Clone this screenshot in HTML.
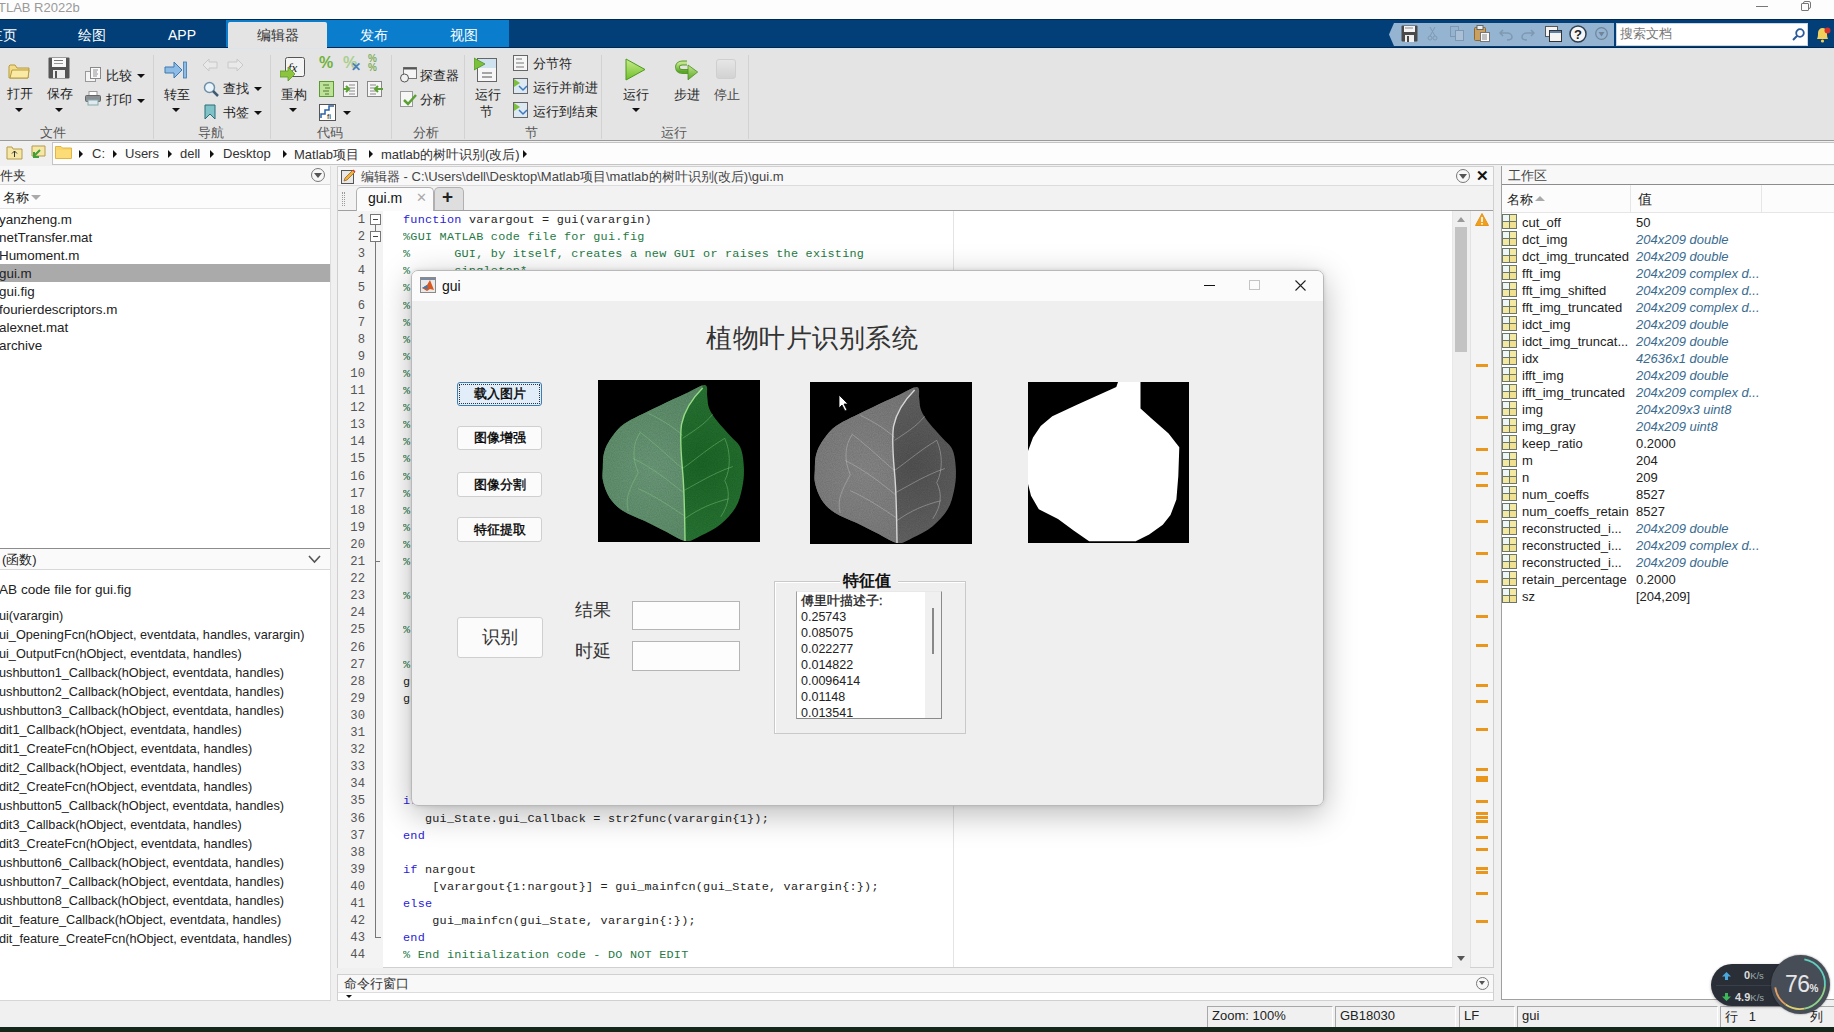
<!DOCTYPE html>
<html><head><meta charset="utf-8">
<style>
*{box-sizing:border-box}
html,body{margin:0;padding:0;width:1834px;height:1032px;overflow:hidden;background:#f0f0f0;font-family:"Liberation Sans",sans-serif;font-size:13px;color:#222}
.a{position:absolute}
.mono{font-family:"Liberation Mono",monospace}
#title{left:0;top:0;width:1834px;height:19px;background:#fdfdfd}
#tabbar{left:0;top:19px;width:1834px;height:29px;background:#023f79;border-top:1px solid #01294f;border-bottom:1px solid #01294f}
.tab{position:absolute;top:0;height:29px;line-height:30px;color:#fff;font-size:14px;text-align:center}
#ribbon{left:0;top:48px;width:1834px;height:93px;background:#e4e4e4;border-top:1px solid #dce3ea;border-bottom:1px solid #9a9a9a}
.sep{position:absolute;top:6px;width:1px;height:84px;background:#d2d2d2}
.glab{position:absolute;top:75px;font-size:13px;color:#555;text-align:center}
.rl{position:absolute;font-size:13px;color:#222;white-space:nowrap}
#addr{left:0;top:141px;width:1834px;height:25px;background:#f0f0f0}
.panel{position:absolute;background:#fff}
.phdr{position:absolute;left:0;top:0;right:0;height:19px;background:#f7f7f7;border-bottom:1px solid #d9d9d9;font-size:13px;color:#333;line-height:18px}
</style></head><body>

<!-- title bar -->
<div id="title" class="a">
  <div class="a" style="left:-2px;top:0;font-size:13px;color:#9a9a9a;line-height:15px">TLAB R2022b</div>
  <div class="a" style="left:1756px;top:6px;width:12px;height:1px;background:#777"></div>
  <div class="a" style="left:1803px;top:1px;width:8px;height:8px;border:1px solid #777;border-radius:2px"></div><div class="a" style="left:1801px;top:3px;width:8px;height:8px;border:1px solid #777;border-radius:1px;background:#fdfdfd"></div>
</div>

<!-- tab bar -->
<div id="tabbar" class="a">
  <div class="a" style="left:226px;top:0;width:283px;height:27px;background:#0a7dcc"></div>
  <div class="a" style="left:228px;top:2px;width:99px;height:27px;background:#e4e4e4;border-radius:2px 2px 0 0"></div>
  <svg class="a" style="left:1389px;top:3px" width="225" height="23" viewBox="0 0 225 23"><path d="M5 0 L225 0 L225 23 L5 23 L0 11.5 Z" fill="#94b4d2"/></svg>
  <svg class="a" style="left:1401px;top:5px" width="17" height="17" viewBox="0 0 17 17"><rect x="0.5" y="0.5" width="16" height="16" rx="1" fill="#4a4a4a"/><rect x="3" y="1" width="11" height="6" fill="#f4f4f4"/><rect x="4" y="2.5" width="8" height="1" fill="#888"/><rect x="4" y="10" width="9" height="7" fill="#f0f0f0"/><rect x="6" y="11" width="2" height="6" fill="#4a4a4a"/></svg>
  <svg class="a" style="left:1427px;top:6px" width="11" height="15" viewBox="0 0 11 15"><path d="M3 10 L8 1 M8 10 L3 1" stroke="#7f98b0" stroke-width="1"/><circle cx="3" cy="12" r="2" fill="none" stroke="#7f98b0"/><circle cx="8" cy="12" r="2" fill="none" stroke="#7f98b0"/></svg>
  <svg class="a" style="left:1450px;top:6px" width="15" height="15" viewBox="0 0 15 15"><rect x="0.5" y="0.5" width="8" height="10" fill="none" stroke="#7f98b0"/><rect x="5.5" y="4.5" width="8" height="10" fill="#a9c0d6" stroke="#7f98b0"/></svg>
  <svg class="a" style="left:1474px;top:5px" width="16" height="17" viewBox="0 0 16 17"><rect x="0.5" y="2.5" width="11" height="13" rx="1" fill="#c9a060" stroke="#8a6a30"/><rect x="3" y="0.5" width="6" height="4" fill="#eee" stroke="#666"/><rect x="6.5" y="7.5" width="9" height="9" fill="#fafafa" stroke="#777"/><path d="M8 10h5M8 12h5M8 14h5" stroke="#888"/></svg>
  <svg class="a" style="left:1499px;top:7px" width="14" height="14" viewBox="0 0 14 14"><path d="M4 3 L1 6 L4 9 M1 6 L8 6 C11 6 13 8 13 10 C13 12 11 13 8 13" fill="none" stroke="#7f98b0" stroke-width="1.5"/></svg>
  <svg class="a" style="left:1521px;top:7px" width="14" height="14" viewBox="0 0 14 14"><path d="M10 3 L13 6 L10 9 M13 6 L6 6 C3 6 1 8 1 10 C1 12 3 13 6 13" fill="none" stroke="#7f98b0" stroke-width="1.5"/></svg>
  <svg class="a" style="left:1545px;top:6px" width="17" height="16" viewBox="0 0 17 16"><rect x="0.5" y="0.5" width="12" height="10" fill="#f4f4f4" stroke="#555"/><rect x="4.5" y="4.5" width="12" height="11" fill="#f4f4f4" stroke="#333"/><rect x="5" y="5" width="11" height="2" fill="#5a7fa8"/></svg>
  <svg class="a" style="left:1569px;top:5px" width="18" height="18" viewBox="0 0 18 18"><circle cx="9" cy="9" r="8" fill="#f6f6f6" stroke="#2d3f52" stroke-width="1.5"/><text x="5" y="14" font-size="13" font-weight="bold" font-family="Liberation Sans" fill="#222">?</text></svg>
  <svg class="a" style="left:1595px;top:7px" width="13" height="13" viewBox="0 0 13 13"><circle cx="6.5" cy="6.5" r="5.8" fill="none" stroke="#6f8499" stroke-width="1.2"/><path d="M3.5 5 L9.5 5 L6.5 9.5 Z" fill="#6f8499"/></svg>
  <div class="a" style="left:1616px;top:3px;width:192px;height:23px;background:#fff;border:1px solid #c9d6e3"></div>
  <div class="a" style="left:1620px;top:6px;font-size:12.5px;color:#777;line-height:16px">搜索文档</div>
  <svg class="a" style="left:1792px;top:8px" width="13" height="13" viewBox="0 0 13 13"><circle cx="8" cy="5" r="3.8" fill="none" stroke="#2a5a9a" stroke-width="1.8"/><path d="M5.2 7.8 L1 12" stroke="#2a5a9a" stroke-width="2"/></svg>
  <svg class="a" style="left:1814px;top:6px" width="18" height="18" viewBox="0 0 18 18"><path d="M3 13 C4 11 4 9 4 7 C4 4 6 2 8.5 2 C11 2 13 4 13 7 C13 9 13 11 14 13 Z" fill="#f2cf5b"/><circle cx="8.5" cy="15" r="1.6" fill="#f2cf5b"/><circle cx="13.5" cy="4.5" r="3" fill="#d9302a"/></svg>
  <div class="tab" style="left:-19px;width:44px">主页</div>
  <div class="tab" style="left:70px;width:44px">绘图</div>
  <div class="tab" style="left:160px;width:44px">APP</div>
  <div class="tab" style="left:228px;width:99px;color:#333">编辑器</div>
  <div class="tab" style="left:350px;width:48px">发布</div>
  <div class="tab" style="left:440px;width:48px">视图</div>
</div>

<!-- ribbon -->
<div id="ribbon" class="a">
  <div class="sep" style="left:153px"></div>
  <div class="sep" style="left:270px"></div>
  <div class="sep" style="left:391px"></div>
  <div class="sep" style="left:464px"></div>
  <div class="sep" style="left:601px"></div>
  <div class="sep" style="left:748px"></div>
  <div class="glab" style="left:38px;width:30px">文件</div>
  <div class="glab" style="left:196px;width:30px">导航</div>
  <div class="glab" style="left:315px;width:30px">代码</div>
  <div class="glab" style="left:411px;width:30px">分析</div>
  <div class="glab" style="left:524px;width:15px">节</div>
  <div class="glab" style="left:659px;width:30px">运行</div>
  <!-- 文件 -->
  <svg class="a" style="left:8px;top:14px" width="22" height="17" viewBox="0 0 22 17"><path d="M1 3 L1 15 L20 15 L21 5 L9 5 L7 2 L2 2 Z" fill="#f3dd8a" stroke="#b89a3a"/><path d="M2 15 L4 7 L21 7 L20 15 Z" fill="#f9eaa6" stroke="#b89a3a"/></svg>
  <div class="rl" style="left:7px;top:36px">打开</div>
  <div class="a" style="left:15px;top:59px;width:0;height:0;border-left:4px solid transparent;border-right:4px solid transparent;border-top:4px solid #111"></div>
  <svg class="a" style="left:48px;top:8px" width="22" height="22" viewBox="0 0 22 22"><rect x="0.5" y="0.5" width="21" height="21" rx="1" fill="#555"/><rect x="4" y="1" width="14" height="9" fill="#fafafa"/><rect x="6" y="3" width="9" height="1" fill="#777"/><rect x="6" y="6" width="9" height="1" fill="#999"/><rect x="5" y="13" width="12" height="8" fill="#eee"/><rect x="7" y="14" width="2" height="7" fill="#555"/></svg>
  <div class="rl" style="left:47px;top:36px">保存</div>
  <div class="a" style="left:55px;top:59px;width:0;height:0;border-left:4px solid transparent;border-right:4px solid transparent;border-top:4px solid #111"></div>
  <svg class="a" style="left:85px;top:18px" width="16" height="15" viewBox="0 0 16 15"><rect x="0.5" y="4.5" width="10" height="10" fill="#f4f4f4" stroke="#999"/><rect x="5.5" y="0.5" width="10" height="11" fill="#fafafa" stroke="#888"/><path d="M8 3h5M8 5h4M8 7h5M8 9h4" stroke="#777" stroke-width="0.8"/></svg>
  <div class="rl" style="left:106px;top:18px">比较</div>
  <div class="a" style="left:137px;top:25px;width:0;height:0;border-left:4px solid transparent;border-right:4px solid transparent;border-top:4px solid #111"></div>
  <svg class="a" style="left:85px;top:42px" width="16" height="15" viewBox="0 0 16 15"><rect x="4" y="0.5" width="8" height="5" fill="#fff" stroke="#999"/><rect x="0.5" y="4.5" width="15" height="6" rx="1" fill="#8a8f94" stroke="#666"/><rect x="3" y="9" width="10" height="5" fill="#dfe9ef" stroke="#8aa"/></svg>
  <div class="rl" style="left:106px;top:42px">打印</div>
  <div class="a" style="left:137px;top:50px;width:0;height:0;border-left:4px solid transparent;border-right:4px solid transparent;border-top:4px solid #111"></div>
  <!-- 导航 -->
  <svg class="a" style="left:164px;top:12px" width="24" height="18" viewBox="0 0 24 18"><path d="M1 6 L10 6 L10 1 L18 9 L10 17 L10 12 L1 12 Z" fill="#8dbde6" stroke="#3f79ad"/><rect x="19.5" y="1" width="3" height="16" fill="#8dbde6" stroke="#3f79ad" stroke-width="0.8"/></svg>
  <div class="rl" style="left:164px;top:37px">转至</div>
  <div class="a" style="left:172px;top:59px;width:0;height:0;border-left:4px solid transparent;border-right:4px solid transparent;border-top:4px solid #111"></div>
  <svg class="a" style="left:202px;top:9px" width="42" height="14" viewBox="0 0 42 14"><path d="M1 7 L7 1 L7 4 L15 4 L15 10 L7 10 L7 13 Z" fill="#e9e9e9" stroke="#c8c8c8"/><path d="M41 7 L35 1 L35 4 L26 4 L26 10 L35 10 L35 13 Z" fill="#e9e9e9" stroke="#c8c8c8"/></svg>
  <svg class="a" style="left:203px;top:32px" width="16" height="16" viewBox="0 0 16 16"><circle cx="6.5" cy="6.5" r="5" fill="#eaf4fb" stroke="#6f8fa8" stroke-width="1.5"/><path d="M10 10 L15 15" stroke="#3d5a75" stroke-width="2.5"/></svg>
  <div class="rl" style="left:223px;top:31px">查找</div>
  <div class="a" style="left:254px;top:38px;width:0;height:0;border-left:4px solid transparent;border-right:4px solid transparent;border-top:4px solid #111"></div>
  <svg class="a" style="left:204px;top:55px" width="12" height="16" viewBox="0 0 12 16"><path d="M1 1 L11 1 L11 15 L6 10 L1 15 Z" fill="#7fc3c9" stroke="#2a6d76"/></svg>
  <div class="rl" style="left:223px;top:55px">书签</div>
  <div class="a" style="left:254px;top:62px;width:0;height:0;border-left:4px solid transparent;border-right:4px solid transparent;border-top:4px solid #111"></div>
  <!-- 代码 -->
  <svg class="a" style="left:280px;top:8px" width="26" height="25" viewBox="0 0 26 25"><rect x="5.5" y="0.5" width="19" height="19" rx="2" fill="#f4f4f4" stroke="#555"/><text x="8" y="15" font-family="Liberation Serif" font-style="italic" font-size="13" fill="#222">fx</text><path d="M0 14 L8 14 L8 10 L15 17 L8 24 L8 20 L0 20 Z" fill="#8cc43e" stroke="#5d9a23" stroke-width="0.8"/></svg>
  <div class="rl" style="left:281px;top:37px">重构</div>
  <div class="a" style="left:289px;top:59px;width:0;height:0;border-left:4px solid transparent;border-right:4px solid transparent;border-top:4px solid #111"></div>
  <div class="a" style="left:319px;top:6px;font-size:16px;font-weight:bold;color:#6fb238;line-height:16px">%</div>
  <div class="a" style="left:343px;top:6px;font-size:16px;font-weight:bold;color:#a9cf8e;line-height:16px">%</div>
  <div class="a" style="left:351px;top:12px;font-size:12px;font-weight:bold;color:#4b7fb6;line-height:12px">✕</div>
  <div class="a" style="left:368px;top:5px;font-size:10px;font-weight:bold;color:#7fae5e;line-height:9px">%<br>%</div>
  <svg class="a" style="left:319px;top:32px" width="70" height="17" viewBox="0 0 70 17"><rect x="0.5" y="0.5" width="14" height="15" fill="#bfe29a" stroke="#5a9a2f"/><path d="M4 4h6M6 7h5M4 10h6M6 13h4" stroke="#4a7a2a"/><rect x="24.5" y="0.5" width="14" height="15" fill="#f6f6f6" stroke="#888"/><path d="M30 4h6M30 7h6M30 10h6M30 13h6" stroke="#888"/><path d="M24 8 L30 8 M27 5 L30 8 L27 11" stroke="#5aa032" stroke-width="2" fill="none"/><rect x="48.5" y="0.5" width="14" height="15" fill="#f6f6f6" stroke="#888"/><path d="M51 4h6M51 7h6M51 10h6M51 13h6" stroke="#888"/><path d="M64 8 L56 8 M59 5 L56 8 L59 11" stroke="#5aa032" stroke-width="2" fill="none"/></svg>
  <svg class="a" style="left:319px;top:55px" width="17" height="17" viewBox="0 0 17 17"><rect x="0.5" y="0.5" width="16" height="16" fill="#fff" stroke="#555"/><path d="M2 14 L2 10 L6 10 L6 6 L10 6 L10 2 L15 2" stroke="#2b63a6" stroke-width="1.5" fill="none"/><text x="8" y="15" font-size="8" font-family="Liberation Sans" fill="#222">fi</text></svg>
  <div class="a" style="left:343px;top:62px;width:0;height:0;border-left:4px solid transparent;border-right:4px solid transparent;border-top:4px solid #111"></div>
  <!-- 分析 -->
  <svg class="a" style="left:400px;top:18px" width="17" height="16" viewBox="0 0 17 16"><rect x="3.5" y="0.5" width="13" height="11" fill="#f4f4f4" stroke="#777"/><rect x="3.5" y="0.5" width="13" height="2" fill="#555"/><circle cx="4.5" cy="11" r="4" fill="#f0f0f0" stroke="#555"/></svg>
  <div class="rl" style="left:420px;top:18px">探查器</div>
  <svg class="a" style="left:400px;top:42px" width="17" height="16" viewBox="0 0 17 16"><rect x="0.5" y="0.5" width="12" height="15" fill="#f6f6f6" stroke="#999"/><path d="M4 9 L8 13 L16 4" stroke="#5aa032" stroke-width="2.5" fill="none"/></svg>
  <div class="rl" style="left:420px;top:42px">分析</div>
  <!-- 节 -->
  <svg class="a" style="left:474px;top:8px" width="24" height="26" viewBox="0 0 24 26"><rect x="3.5" y="1.5" width="19" height="23" fill="#f6f6f6" stroke="#666"/><rect x="4" y="2" width="18" height="9" fill="#cfe2f0"/><path d="M8 16h10M8 20h10" stroke="#555"/><path d="M0 1 L11 7 L0 13 Z" fill="#7cc13c" stroke="#4d8f24" stroke-width="0.8"/></svg>
  <div class="rl" style="left:475px;top:37px">运行</div>
  <div class="rl" style="left:480px;top:54px">节</div>
  <svg class="a" style="left:513px;top:6px" width="15" height="16" viewBox="0 0 15 16"><rect x="0.5" y="0.5" width="14" height="15" fill="#f6f6f6" stroke="#666"/><path d="M3 4h6M3 8h8M3 12h8" stroke="#777"/></svg>
  <div class="rl" style="left:533px;top:6px">分节符</div>
  <svg class="a" style="left:513px;top:29px" width="15" height="40" viewBox="0 0 15 40"><rect x="0.5" y="0.5" width="14" height="15" fill="#dde9f2" stroke="#666"/><path d="M1 1 L7 5 L1 9 Z" fill="#7cc13c"/><path d="M6 8 L10 12 L14 8" stroke="#3b7ac0" stroke-width="1.5" fill="none"/><rect x="0.5" y="24.5" width="14" height="15" fill="#dde9f2" stroke="#666"/><path d="M1 25 L7 29 L1 33 Z" fill="#7cc13c"/><path d="M6 32 L10 36 L14 32" stroke="#3b7ac0" stroke-width="1.5" fill="none"/></svg>
  <div class="rl" style="left:533px;top:30px">运行并前进</div>
  <div class="rl" style="left:533px;top:54px">运行到结束</div>
  <!-- 运行 -->
  <svg class="a" style="left:625px;top:9px" width="22" height="23" viewBox="0 0 22 23"><defs><linearGradient id="gp" x1="0" y1="0" x2="0" y2="1"><stop offset="0" stop-color="#c9ec8c"/><stop offset="1" stop-color="#6fbf2a"/></linearGradient></defs><path d="M1 1 L20 11.5 L1 22 Z" fill="url(#gp)" stroke="#4c9a1c"/></svg>
  <div class="rl" style="left:623px;top:37px">运行</div>
  <div class="a" style="left:632px;top:59px;width:0;height:0;border-left:4px solid transparent;border-right:4px solid transparent;border-top:4px solid #111"></div>
  <svg class="a" style="left:673px;top:9px" width="26" height="24" viewBox="0 0 26 24"><defs><linearGradient id="gst" x1="0" y1="0" x2="0" y2="1"><stop offset="0" stop-color="#c2e68a"/><stop offset="1" stop-color="#5aa82a"/></linearGradient></defs><path d="M14 5 L9.5 5 C6 5 4.5 7 4.5 9.2 C4.5 11.5 6 13.5 9.5 13.5 L16 13.5" fill="none" stroke="#5a9a2a" stroke-width="4.8"/><path d="M14 5 L9.5 5 C6 5 4.5 7 4.5 9.2 C4.5 11.5 6 13.5 9.5 13.5 L16 13.5" fill="none" stroke="url(#gst)" stroke-width="3"/><path d="M15 7 L24.7 14 L15 21.8 Z" fill="url(#gst)" stroke="#4d8f22" stroke-width="0.8" stroke-linejoin="round"/></svg>
  <div class="rl" style="left:674px;top:37px">步进</div>
  <div class="a" style="left:716px;top:10px;width:20px;height:20px;border-radius:3px;background:linear-gradient(#e6e6e6,#d2d2d2);border:1px solid #cfcfcf"></div>
  <div class="rl" style="left:714px;top:37px;color:#444">停止</div>
</div>

<!-- address bar -->
<div id="addr" class="a">
  <svg class="a" style="left:6px;top:4px" width="17" height="15" viewBox="0 0 17 15"><path d="M1 2 L6 2 L7 4 L16 4 L16 14 L1 14 Z" fill="#f6e7a6" stroke="#b59b4c"/><path d="M8.5 12 L8.5 6 M6 8.5 L8.5 6 L11 8.5" stroke="#333" fill="none"/></svg>
  <svg class="a" style="left:29px;top:4px" width="17" height="15" viewBox="0 0 17 15"><path d="M3 1 L16 1 L16 11 L3 11 Z" fill="#f6e7a6" stroke="#b59b4c"/><path d="M11 5 L5 11 M5 7 L5 12 L10 12" stroke="#3fa03a" stroke-width="2" fill="none"/></svg>
  <div class="a" style="left:52px;top:1px;width:1782px;height:23px;background:#fdfdfd;border:1px solid #c4c4c4;border-right:none"></div>
  <svg class="a" style="left:55px;top:4px" width="17" height="14" viewBox="0 0 17 14"><path d="M0.5 1.5 L6 1.5 L7.5 3 L16.5 3 L16.5 13.5 L0.5 13.5 Z" fill="#f7d56a" stroke="#e2b443"/><rect x="1" y="5" width="15" height="8" fill="#fbdc77"/></svg>
<div class="a" style="left:79px;top:9px;width:0;height:0;border-top:4px solid transparent;border-bottom:4px solid transparent;border-left:4px solid #111"></div>
  <div class="rl" style="left:92px;top:5px;color:#333">C:</div><div class="a" style="left:113px;top:9px;width:0;height:0;border-top:4px solid transparent;border-bottom:4px solid transparent;border-left:4px solid #111"></div>
  <div class="rl" style="left:125px;top:5px;color:#333">Users</div><div class="a" style="left:168px;top:9px;width:0;height:0;border-top:4px solid transparent;border-bottom:4px solid transparent;border-left:4px solid #111"></div>
  <div class="rl" style="left:180px;top:5px;color:#333">dell</div><div class="a" style="left:210px;top:9px;width:0;height:0;border-top:4px solid transparent;border-bottom:4px solid transparent;border-left:4px solid #111"></div>
  <div class="rl" style="left:223px;top:5px;color:#333">Desktop</div><div class="a" style="left:283px;top:9px;width:0;height:0;border-top:4px solid transparent;border-bottom:4px solid transparent;border-left:4px solid #111"></div>
  <div class="rl" style="left:294px;top:5px;color:#333">Matlab项目</div><div class="a" style="left:369px;top:9px;width:0;height:0;border-top:4px solid transparent;border-bottom:4px solid transparent;border-left:4px solid #111"></div>
  <div class="rl" style="left:381px;top:5px;color:#333">matlab的树叶识别(改后)</div><div class="a" style="left:523px;top:9px;width:0;height:0;border-top:4px solid transparent;border-bottom:4px solid transparent;border-left:4px solid #111"></div>
</div>
<!-- left panel -->
<div class="panel" style="left:0;top:166px;width:331px;height:835px;border-right:1px solid #dedede;border-bottom:1px solid #d6d6d6">
  <div class="phdr" style="padding-left:0">
    <span class="a" style="left:-13px;top:1px">文件夹</span>
    <div class="a" style="left:311px;top:2px;width:14px;height:14px;border:1px solid #777;border-radius:50%"></div>
    <div class="a" style="left:314px;top:7px;width:0;height:0;border-left:4px solid transparent;border-right:4px solid transparent;border-top:5px solid #555"></div>
  </div>
  <div class="a" style="left:0;top:19px;width:330px;height:24px;background:#fcfcfc;border-bottom:1px solid #e3e3e3">
    <span class="a" style="left:3px;top:4px;color:#222">名称</span>
    <div class="a" style="left:31px;top:10px;width:0;height:0;border-left:5px solid transparent;border-right:5px solid transparent;border-top:5px solid #aaa"></div>
  </div>
  <div class="a" style="left:-1px;top:45px;line-height:18px;white-space:nowrap;font-size:13.4px">yanzheng.m</div>
  <div class="a" style="left:-1px;top:63px;line-height:18px;white-space:nowrap;font-size:13.4px">netTransfer.mat</div>
  <div class="a" style="left:-1px;top:81px;line-height:18px;white-space:nowrap;font-size:13.4px">Humoment.m</div>
  <div class="a" style="left:0;top:98px;width:330px;height:18px;background:#aaaaaa"></div>
  <div class="a" style="left:-1px;top:99px;line-height:18px;white-space:nowrap;font-size:13.4px">gui.m</div>
  <div class="a" style="left:-1px;top:117px;line-height:18px;white-space:nowrap;font-size:13.4px">gui.fig</div>
  <div class="a" style="left:-1px;top:135px;line-height:18px;white-space:nowrap;font-size:13.4px">fourierdescriptors.m</div>
  <div class="a" style="left:-1px;top:153px;line-height:18px;white-space:nowrap;font-size:13.4px">alexnet.mat</div>
  <div class="a" style="left:-1px;top:171px;line-height:18px;white-space:nowrap;font-size:13.4px">archive</div>
  <div class="a" style="left:0;top:382px;width:330px;height:22px;background:#fafafa;border-top:1px solid #8c8c8c;border-bottom:1px solid #d8d8d8">
    <span class="a" style="left:2px;top:2px">(函数)</span>
    <svg class="a" style="left:308px;top:6px" width="13" height="9" viewBox="0 0 13 9"><path d="M1 1 L6.5 7 L12 1" stroke="#555" stroke-width="1.6" fill="none"/></svg>
  </div>
  <div class="a" style="left:-1px;top:415px;line-height:18px;white-space:nowrap;font-size:13.6px">AB code file for gui.fig</div>
  <div class="a" style="left:-1px;top:441px;line-height:18px;white-space:nowrap;font-size:12.7px">ui(varargin)</div>
  <div class="a" style="left:-1px;top:460px;line-height:18px;white-space:nowrap;font-size:12.7px">ui_OpeningFcn(hObject, eventdata, handles, varargin)</div>
  <div class="a" style="left:-1px;top:479px;line-height:18px;white-space:nowrap;font-size:12.7px">ui_OutputFcn(hObject, eventdata, handles)</div>
  <div class="a" style="left:-1px;top:498px;line-height:18px;white-space:nowrap;font-size:12.7px">ushbutton1_Callback(hObject, eventdata, handles)</div>
  <div class="a" style="left:-1px;top:517px;line-height:18px;white-space:nowrap;font-size:12.7px">ushbutton2_Callback(hObject, eventdata, handles)</div>
  <div class="a" style="left:-1px;top:536px;line-height:18px;white-space:nowrap;font-size:12.7px">ushbutton3_Callback(hObject, eventdata, handles)</div>
  <div class="a" style="left:-1px;top:555px;line-height:18px;white-space:nowrap;font-size:12.7px">dit1_Callback(hObject, eventdata, handles)</div>
  <div class="a" style="left:-1px;top:574px;line-height:18px;white-space:nowrap;font-size:12.7px">dit1_CreateFcn(hObject, eventdata, handles)</div>
  <div class="a" style="left:-1px;top:593px;line-height:18px;white-space:nowrap;font-size:12.7px">dit2_Callback(hObject, eventdata, handles)</div>
  <div class="a" style="left:-1px;top:612px;line-height:18px;white-space:nowrap;font-size:12.7px">dit2_CreateFcn(hObject, eventdata, handles)</div>
  <div class="a" style="left:-1px;top:631px;line-height:18px;white-space:nowrap;font-size:12.7px">ushbutton5_Callback(hObject, eventdata, handles)</div>
  <div class="a" style="left:-1px;top:650px;line-height:18px;white-space:nowrap;font-size:12.7px">dit3_Callback(hObject, eventdata, handles)</div>
  <div class="a" style="left:-1px;top:669px;line-height:18px;white-space:nowrap;font-size:12.7px">dit3_CreateFcn(hObject, eventdata, handles)</div>
  <div class="a" style="left:-1px;top:688px;line-height:18px;white-space:nowrap;font-size:12.7px">ushbutton6_Callback(hObject, eventdata, handles)</div>
  <div class="a" style="left:-1px;top:707px;line-height:18px;white-space:nowrap;font-size:12.7px">ushbutton7_Callback(hObject, eventdata, handles)</div>
  <div class="a" style="left:-1px;top:726px;line-height:18px;white-space:nowrap;font-size:12.7px">ushbutton8_Callback(hObject, eventdata, handles)</div>
  <div class="a" style="left:-1px;top:745px;line-height:18px;white-space:nowrap;font-size:12.7px">dit_feature_Callback(hObject, eventdata, handles)</div>
  <div class="a" style="left:-1px;top:764px;line-height:18px;white-space:nowrap;font-size:12.7px">dit_feature_CreateFcn(hObject, eventdata, handles)</div>
</div>
<!-- editor panel -->
<style>
.cl{position:absolute;left:0;height:17px;line-height:17px;white-space:pre;font-family:"Liberation Mono",monospace;font-size:11.8px;letter-spacing:0.24px;color:#222}
.ln{position:absolute;right:0;width:30px;text-align:right;height:17px;line-height:17px;font-family:"Liberation Mono",monospace;font-size:12.2px;color:#555}
.om{position:absolute;left:1476px;width:12px;height:3px;background:#e8961c}
</style>
<div class="a" style="left:337px;top:166px;width:1157px;height:802px;background:#fff;border:1px solid #d0d0d0">
  <div class="a" style="left:0;top:0;width:1155px;height:19px;background:#f8f8f8;border-bottom:1px solid #dcdcdc"></div>
  <svg class="a" style="left:3px;top:2px" width="15" height="15" viewBox="0 0 15 15"><rect x="0.5" y="1.5" width="12" height="13" fill="#e8e8e8" stroke="#555"/><path d="M3 12 L4 9 L12 1 L14 3 L6 11 Z" fill="#f2b33d" stroke="#8a5a1a" stroke-width="0.7"/><path d="M12 1 L14 3" stroke="#d33" stroke-width="1.5"/></svg>
  <div class="a" style="left:23px;top:1px;color:#444;line-height:17px;white-space:nowrap">编辑器 - C:\Users\dell\Desktop\Matlab项目\matlab的树叶识别(改后)\gui.m</div>
  <div class="a" style="left:1118px;top:2px;width:14px;height:14px;border:1px solid #777;border-radius:50%"></div>
  <div class="a" style="left:1121px;top:7px;width:0;height:0;border-left:4px solid transparent;border-right:4px solid transparent;border-top:5px solid #555"></div>
  <div class="a" style="left:1138px;top:0px;font-size:15px;font-weight:bold;color:#111;line-height:18px">✕</div>
  <div class="a" style="left:0;top:19px;width:1155px;height:25px;background:#f2f2f2;border-bottom:1px solid #a0a0a0"></div>
  <div class="a" style="left:4px;top:25px;width:3px;height:14px;border-left:1px dotted #999;border-right:1px dotted #999"></div>
  <div class="a" style="left:18px;top:20px;width:78px;height:24px;background:#fbfbfb;border:1px solid #b0b0b0;border-bottom:none;border-radius:5px 5px 0 0"></div>
  <div class="a" style="left:30px;top:21px;font-size:14px;color:#111;line-height:20px">gui.m</div>
  <div class="a" style="left:78px;top:22px;font-size:13px;color:#aaa;line-height:18px">✕</div>
  <div class="a" style="left:96px;top:20px;width:30px;height:23px;background:#dedede;border:1px solid #b0b0b0;border-bottom:none;border-radius:5px 5px 0 0"></div>
  <div class="a" style="left:104px;top:19px;font-size:19px;font-weight:bold;color:#222;line-height:22px">+</div>
  <!-- gutter -->
  <div class="a" style="left:0;top:44px;width:45px;height:757px;background:#f3f3f3"></div>
  <div class="a" style="left:-3px;top:44px;width:30px;height:757px">
<div class="ln" style="top:1.00px">1</div>
<div class="ln" style="top:18.10px">2</div>
<div class="ln" style="top:35.20px">3</div>
<div class="ln" style="top:52.30px">4</div>
<div class="ln" style="top:69.40px">5</div>
<div class="ln" style="top:86.50px">6</div>
<div class="ln" style="top:103.60px">7</div>
<div class="ln" style="top:120.70px">8</div>
<div class="ln" style="top:137.80px">9</div>
<div class="ln" style="top:154.90px">10</div>
<div class="ln" style="top:172.00px">11</div>
<div class="ln" style="top:189.10px">12</div>
<div class="ln" style="top:206.20px">13</div>
<div class="ln" style="top:223.30px">14</div>
<div class="ln" style="top:240.40px">15</div>
<div class="ln" style="top:257.50px">16</div>
<div class="ln" style="top:274.60px">17</div>
<div class="ln" style="top:291.70px">18</div>
<div class="ln" style="top:308.80px">19</div>
<div class="ln" style="top:325.90px">20</div>
<div class="ln" style="top:343.00px">21</div>
<div class="ln" style="top:360.10px">22</div>
<div class="ln" style="top:377.20px">23</div>
<div class="ln" style="top:394.30px">24</div>
<div class="ln" style="top:411.40px">25</div>
<div class="ln" style="top:428.50px">26</div>
<div class="ln" style="top:445.60px">27</div>
<div class="ln" style="top:462.70px">28</div>
<div class="ln" style="top:479.80px">29</div>
<div class="ln" style="top:496.90px">30</div>
<div class="ln" style="top:514.00px">31</div>
<div class="ln" style="top:531.10px">32</div>
<div class="ln" style="top:548.20px">33</div>
<div class="ln" style="top:565.30px">34</div>
<div class="ln" style="top:582.40px">35</div>
<div class="ln" style="top:599.50px">36</div>
<div class="ln" style="top:616.60px">37</div>
<div class="ln" style="top:633.70px">38</div>
<div class="ln" style="top:650.80px">39</div>
<div class="ln" style="top:667.90px">40</div>
<div class="ln" style="top:685.00px">41</div>
<div class="ln" style="top:702.10px">42</div>
<div class="ln" style="top:719.20px">43</div>
<div class="ln" style="top:736.30px">44</div>
  </div>
  <div class="a" style="left:32px;top:47px;width:11px;height:11px;border:1px solid #777;background:#fff"></div>
  <div class="a" style="left:35px;top:52px;width:5px;height:1px;background:#444"></div>
  <div class="a" style="left:32px;top:64px;width:11px;height:11px;border:1px solid #777;background:#fff"></div>
  <div class="a" style="left:35px;top:69px;width:5px;height:1px;background:#444"></div>
  <div class="a" style="left:37px;top:58px;width:1px;height:6px;background:#777"></div>
  <div class="a" style="left:37px;top:75px;width:1px;height:696px;background:#777"></div>
  <div class="a" style="left:37px;top:394px;width:5px;height:1px;background:#777"></div>
  <div class="a" style="left:37px;top:770px;width:6px;height:1px;background:#777"></div>
  <div class="a" style="left:65px;top:44px;width:1000px;height:757px;overflow:hidden">
<div class="cl" style="top:1.00px"><span style="color:#2a22d6">function</span> varargout = gui(varargin)</div>
<div class="cl" style="top:18.10px"><span style="color:#1f7a45">%GUI MATLAB code file for gui.fig</span></div>
<div class="cl" style="top:35.20px"><span style="color:#1f7a45">%      GUI, by itself, creates a new GUI or raises the existing</span></div>
<div class="cl" style="top:52.30px"><span style="color:#1f7a45">%      singleton*.</span></div>
<div class="cl" style="top:69.40px"><span style="color:#1f7a45">%</span></div>
<div class="cl" style="top:86.50px"><span style="color:#1f7a45">%      H = GUI returns the handle to a new GUI or the handle to</span></div>
<div class="cl" style="top:103.60px"><span style="color:#1f7a45">%      the existing singleton*.</span></div>
<div class="cl" style="top:120.70px"><span style="color:#1f7a45">%</span></div>
<div class="cl" style="top:137.80px"><span style="color:#1f7a45">%      GUI(&#x27;Property&#x27;,&#x27;Value&#x27;,...) creates a new GUI using the</span></div>
<div class="cl" style="top:154.90px"><span style="color:#1f7a45">%      given property value pairs. Unrecognized properties are passed via</span></div>
<div class="cl" style="top:172.00px"><span style="color:#1f7a45">%      varargin to gui_OpeningFcn.  This calling syntax produces a</span></div>
<div class="cl" style="top:189.10px"><span style="color:#1f7a45">%      warning when there is an existing singleton*.</span></div>
<div class="cl" style="top:206.20px"><span style="color:#1f7a45">%</span></div>
<div class="cl" style="top:223.30px"><span style="color:#1f7a45">%      GUI(&#x27;CALLBACK&#x27;) and GUI(&#x27;CALLBACK&#x27;,hObject,...) call the</span></div>
<div class="cl" style="top:240.40px"><span style="color:#1f7a45">%      local function named CALLBACK in GUI.M with the given input</span></div>
<div class="cl" style="top:257.50px"><span style="color:#1f7a45">%      arguments.</span></div>
<div class="cl" style="top:274.60px"><span style="color:#1f7a45">%</span></div>
<div class="cl" style="top:291.70px"><span style="color:#1f7a45">%      *See GUI Options on GUIDE&#x27;s Tools menu.  Choose &quot;GUI allows only one</span></div>
<div class="cl" style="top:308.80px"><span style="color:#1f7a45">%      instance to run (singleton)&quot;.</span></div>
<div class="cl" style="top:325.90px"><span style="color:#1f7a45">%</span></div>
<div class="cl" style="top:343.00px"><span style="color:#1f7a45">% See also: GUIDE, GUIDATA, GUIHANDLES</span></div>
<div class="cl" style="top:360.10px"></div>
<div class="cl" style="top:377.20px"><span style="color:#1f7a45">% Edit the above text to modify the response to help gui</span></div>
<div class="cl" style="top:394.30px"></div>
<div class="cl" style="top:411.40px"><span style="color:#1f7a45">% Last Modified by GUIDE v2.5 20-May-2024 15:20:11</span></div>
<div class="cl" style="top:428.50px"></div>
<div class="cl" style="top:445.60px"><span style="color:#1f7a45">% Begin initialization code - DO NOT EDIT</span></div>
<div class="cl" style="top:462.70px">gui_Singleton = 1;</div>
<div class="cl" style="top:479.80px">gui_State = struct(&#x27;gui_Name&#x27;,       mfilename, ...</div>
<div class="cl" style="top:496.90px">                   &#x27;gui_Singleton&#x27;,  gui_Singleton, ...</div>
<div class="cl" style="top:514.00px">                   &#x27;gui_OpeningFcn&#x27;, @gui_OpeningFcn, ...</div>
<div class="cl" style="top:531.10px">                   &#x27;gui_OutputFcn&#x27;,  @gui_OutputFcn, ...</div>
<div class="cl" style="top:548.20px">                   &#x27;gui_LayoutFcn&#x27;,  [] , ...</div>
<div class="cl" style="top:565.30px">                   &#x27;gui_Callback&#x27;,   []);</div>
<div class="cl" style="top:582.40px"><span style="color:#2a22d6">if</span> nargin &amp;&amp; ischar(varargin{1})</div>
<div class="cl" style="top:599.50px">   gui_State.gui_Callback = str2func(varargin{1});</div>
<div class="cl" style="top:616.60px"><span style="color:#2a22d6">end</span></div>
<div class="cl" style="top:633.70px"></div>
<div class="cl" style="top:650.80px"><span style="color:#2a22d6">if</span> nargout</div>
<div class="cl" style="top:667.90px">    [varargout{1:nargout}] = gui_mainfcn(gui_State, varargin{:});</div>
<div class="cl" style="top:685.00px"><span style="color:#2a22d6">else</span></div>
<div class="cl" style="top:702.10px">    gui_mainfcn(gui_State, varargin{:});</div>
<div class="cl" style="top:719.20px"><span style="color:#2a22d6">end</span></div>
<div class="cl" style="top:736.30px"><span style="color:#1f7a45">% End initialization code - DO NOT EDIT</span></div>
  </div>
  <div class="a" style="left:615px;top:44px;width:1px;height:756px;background:#e4e4e4"></div>
  <!-- scrollbar -->
  <div class="a" style="left:1114px;top:44px;width:18px;height:757px;background:#efefef;border-left:1px solid #e8e8e8"></div>
  <div class="a" style="left:1119px;top:50px;width:0;height:0;border-left:4px solid transparent;border-right:4px solid transparent;border-bottom:5px solid #999"></div>
  <div class="a" style="left:1119px;top:789px;width:0;height:0;border-left:4px solid transparent;border-right:4px solid transparent;border-top:5px solid #555"></div>
  <div class="a" style="left:1117px;top:60px;width:12px;height:125px;background:#c3c3c3"></div>
  <div class="a" style="left:1132px;top:44px;width:23px;height:756px;background:#f4f4f4;border-left:1px solid #e2e2e2"></div>
  <svg class="a" style="left:1137px;top:46px" width="14" height="13" viewBox="0 0 14 13"><path d="M7 0.5 L13.5 12.5 L0.5 12.5 Z" fill="#f0a020" stroke="#e39419" stroke-linejoin="round"/><rect x="6.2" y="4" width="1.6" height="5" fill="#fff"/><rect x="6.2" y="10" width="1.6" height="1.6" fill="#fff"/></svg>
</div>
<div class="om" style="top:364px"></div>
<div class="om" style="top:416px"></div>
<div class="om" style="top:448px"></div>
<div class="om" style="top:472px"></div>
<div class="om" style="top:484px"></div>
<div class="om" style="top:520px"></div>
<div class="om" style="top:552px"></div>
<div class="om" style="top:580px"></div>
<div class="om" style="top:615px"></div>
<div class="om" style="top:644px"></div>
<div class="om" style="top:684px"></div>
<div class="om" style="top:700px"></div>
<div class="om" style="top:728px"></div>
<div class="om" style="top:768px"></div>
<div class="om" style="top:776px"></div>
<div class="om" style="top:779px"></div>
<div class="om" style="top:800px"></div>
<div class="om" style="top:812px"></div>
<div class="om" style="top:816px"></div>
<div class="om" style="top:820px"></div>
<div class="om" style="top:836px"></div>
<div class="om" style="top:848px"></div>
<div class="om" style="top:867px"></div>
<div class="om" style="top:871px"></div>
<div class="om" style="top:892px"></div>
<div class="om" style="top:920px"></div>
<!-- command window -->
<div class="a" style="left:337px;top:974px;width:1157px;height:27px;background:#fff;border:1px solid #d0d0d0">
  <div class="a" style="left:0;top:0;width:1155px;height:18px;background:#f8f8f8;border-bottom:1px solid #dcdcdc"></div>
  <div class="a" style="left:6px;top:1px;color:#333;line-height:16px;font-size:12.5px">命令行窗口</div>
  <div class="a" style="left:1138px;top:2px;width:13px;height:13px;border:1px solid #777;border-radius:50%"></div>
  <div class="a" style="left:1141px;top:6px;width:0;height:0;border-left:3.5px solid transparent;border-right:3.5px solid transparent;border-top:4px solid #555"></div>
  <div class="a" style="left:8px;top:20px;width:0;height:0;border-left:3px solid transparent;border-right:3px solid transparent;border-top:3px solid #111"></div>
</div>

<!-- workspace -->
<div class="a" style="left:1501px;top:166px;width:333px;height:834px;background:#fff;border-left:1px solid #a0a0a0;border-bottom:1px solid #a0a0a0">
  <div class="a" style="left:0;top:0;width:333px;height:19px;background:#f8f8f8;border-bottom:1px solid #8c8c8c">
    <span class="a" style="left:6px;top:1px;color:#444;line-height:17px">工作区</span>
  </div>
  <div class="a" style="left:0;top:19px;width:333px;height:28px;background:#fcfcfc;border-bottom:1px solid #e6e6e6">
    <span class="a" style="left:5px;top:6px;color:#222">名称</span>
    <div class="a" style="left:33px;top:11px;width:0;height:0;border-left:5px solid transparent;border-right:5px solid transparent;border-bottom:5px solid #aaa"></div>
    <div class="a" style="left:128px;top:0;width:1px;height:28px;background:#e6e6e6"></div>
    <span class="a" style="left:136px;top:6px;color:#222;font-size:14px">值</span>
    <div class="a" style="left:259px;top:0;width:1px;height:28px;background:#e6e6e6"></div>
  </div>
  <svg class="a" style="left:0px;top:48px" width="15" height="15" viewBox="0 0 15 15"><rect x="0" y="0" width="15" height="15" fill="#6b766b"/><rect x="1" y="1" width="6" height="6" fill="#eef6f6"/><rect x="8" y="1" width="6" height="6" fill="#f3e9a2"/><rect x="1" y="8" width="6" height="6" fill="#f3e9a2"/><rect x="8" y="8" width="6" height="6" fill="#f0e090"/></svg>
  <div class="a" style="left:20px;top:49px;line-height:16px;white-space:nowrap;color:#222">cut_off</div>
  <div class="a" style="left:134px;top:49px;line-height:16px;white-space:nowrap;color:#222">50</div>
  <svg class="a" style="left:0px;top:65px" width="15" height="15" viewBox="0 0 15 15"><rect x="0" y="0" width="15" height="15" fill="#6b766b"/><rect x="1" y="1" width="6" height="6" fill="#eef6f6"/><rect x="8" y="1" width="6" height="6" fill="#f3e9a2"/><rect x="1" y="8" width="6" height="6" fill="#f3e9a2"/><rect x="8" y="8" width="6" height="6" fill="#f0e090"/></svg>
  <div class="a" style="left:20px;top:66px;line-height:16px;white-space:nowrap;color:#222">dct_img</div>
  <div class="a" style="left:134px;top:66px;line-height:16px;white-space:nowrap;font-style:italic;color:#3a6b8f">204x209 double</div>
  <svg class="a" style="left:0px;top:82px" width="15" height="15" viewBox="0 0 15 15"><rect x="0" y="0" width="15" height="15" fill="#6b766b"/><rect x="1" y="1" width="6" height="6" fill="#eef6f6"/><rect x="8" y="1" width="6" height="6" fill="#f3e9a2"/><rect x="1" y="8" width="6" height="6" fill="#f3e9a2"/><rect x="8" y="8" width="6" height="6" fill="#f0e090"/></svg>
  <div class="a" style="left:20px;top:83px;line-height:16px;white-space:nowrap;color:#222">dct_img_truncated</div>
  <div class="a" style="left:134px;top:83px;line-height:16px;white-space:nowrap;font-style:italic;color:#3a6b8f">204x209 double</div>
  <svg class="a" style="left:0px;top:99px" width="15" height="15" viewBox="0 0 15 15"><rect x="0" y="0" width="15" height="15" fill="#6b766b"/><rect x="1" y="1" width="6" height="6" fill="#eef6f6"/><rect x="8" y="1" width="6" height="6" fill="#f3e9a2"/><rect x="1" y="8" width="6" height="6" fill="#f3e9a2"/><rect x="8" y="8" width="6" height="6" fill="#f0e090"/></svg>
  <div class="a" style="left:20px;top:100px;line-height:16px;white-space:nowrap;color:#222">fft_img</div>
  <div class="a" style="left:134px;top:100px;line-height:16px;white-space:nowrap;font-style:italic;color:#3a6b8f">204x209 complex d...</div>
  <svg class="a" style="left:0px;top:116px" width="15" height="15" viewBox="0 0 15 15"><rect x="0" y="0" width="15" height="15" fill="#6b766b"/><rect x="1" y="1" width="6" height="6" fill="#eef6f6"/><rect x="8" y="1" width="6" height="6" fill="#f3e9a2"/><rect x="1" y="8" width="6" height="6" fill="#f3e9a2"/><rect x="8" y="8" width="6" height="6" fill="#f0e090"/></svg>
  <div class="a" style="left:20px;top:117px;line-height:16px;white-space:nowrap;color:#222">fft_img_shifted</div>
  <div class="a" style="left:134px;top:117px;line-height:16px;white-space:nowrap;font-style:italic;color:#3a6b8f">204x209 complex d...</div>
  <svg class="a" style="left:0px;top:133px" width="15" height="15" viewBox="0 0 15 15"><rect x="0" y="0" width="15" height="15" fill="#6b766b"/><rect x="1" y="1" width="6" height="6" fill="#eef6f6"/><rect x="8" y="1" width="6" height="6" fill="#f3e9a2"/><rect x="1" y="8" width="6" height="6" fill="#f3e9a2"/><rect x="8" y="8" width="6" height="6" fill="#f0e090"/></svg>
  <div class="a" style="left:20px;top:134px;line-height:16px;white-space:nowrap;color:#222">fft_img_truncated</div>
  <div class="a" style="left:134px;top:134px;line-height:16px;white-space:nowrap;font-style:italic;color:#3a6b8f">204x209 complex d...</div>
  <svg class="a" style="left:0px;top:150px" width="15" height="15" viewBox="0 0 15 15"><rect x="0" y="0" width="15" height="15" fill="#6b766b"/><rect x="1" y="1" width="6" height="6" fill="#eef6f6"/><rect x="8" y="1" width="6" height="6" fill="#f3e9a2"/><rect x="1" y="8" width="6" height="6" fill="#f3e9a2"/><rect x="8" y="8" width="6" height="6" fill="#f0e090"/></svg>
  <div class="a" style="left:20px;top:151px;line-height:16px;white-space:nowrap;color:#222">idct_img</div>
  <div class="a" style="left:134px;top:151px;line-height:16px;white-space:nowrap;font-style:italic;color:#3a6b8f">204x209 double</div>
  <svg class="a" style="left:0px;top:167px" width="15" height="15" viewBox="0 0 15 15"><rect x="0" y="0" width="15" height="15" fill="#6b766b"/><rect x="1" y="1" width="6" height="6" fill="#eef6f6"/><rect x="8" y="1" width="6" height="6" fill="#f3e9a2"/><rect x="1" y="8" width="6" height="6" fill="#f3e9a2"/><rect x="8" y="8" width="6" height="6" fill="#f0e090"/></svg>
  <div class="a" style="left:20px;top:168px;line-height:16px;white-space:nowrap;color:#222">idct_img_truncat...</div>
  <div class="a" style="left:134px;top:168px;line-height:16px;white-space:nowrap;font-style:italic;color:#3a6b8f">204x209 double</div>
  <svg class="a" style="left:0px;top:184px" width="15" height="15" viewBox="0 0 15 15"><rect x="0" y="0" width="15" height="15" fill="#6b766b"/><rect x="1" y="1" width="6" height="6" fill="#eef6f6"/><rect x="8" y="1" width="6" height="6" fill="#f3e9a2"/><rect x="1" y="8" width="6" height="6" fill="#f3e9a2"/><rect x="8" y="8" width="6" height="6" fill="#f0e090"/></svg>
  <div class="a" style="left:20px;top:185px;line-height:16px;white-space:nowrap;color:#222">idx</div>
  <div class="a" style="left:134px;top:185px;line-height:16px;white-space:nowrap;font-style:italic;color:#3a6b8f">42636x1 double</div>
  <svg class="a" style="left:0px;top:201px" width="15" height="15" viewBox="0 0 15 15"><rect x="0" y="0" width="15" height="15" fill="#6b766b"/><rect x="1" y="1" width="6" height="6" fill="#eef6f6"/><rect x="8" y="1" width="6" height="6" fill="#f3e9a2"/><rect x="1" y="8" width="6" height="6" fill="#f3e9a2"/><rect x="8" y="8" width="6" height="6" fill="#f0e090"/></svg>
  <div class="a" style="left:20px;top:202px;line-height:16px;white-space:nowrap;color:#222">ifft_img</div>
  <div class="a" style="left:134px;top:202px;line-height:16px;white-space:nowrap;font-style:italic;color:#3a6b8f">204x209 double</div>
  <svg class="a" style="left:0px;top:218px" width="15" height="15" viewBox="0 0 15 15"><rect x="0" y="0" width="15" height="15" fill="#6b766b"/><rect x="1" y="1" width="6" height="6" fill="#eef6f6"/><rect x="8" y="1" width="6" height="6" fill="#f3e9a2"/><rect x="1" y="8" width="6" height="6" fill="#f3e9a2"/><rect x="8" y="8" width="6" height="6" fill="#f0e090"/></svg>
  <div class="a" style="left:20px;top:219px;line-height:16px;white-space:nowrap;color:#222">ifft_img_truncated</div>
  <div class="a" style="left:134px;top:219px;line-height:16px;white-space:nowrap;font-style:italic;color:#3a6b8f">204x209 complex d...</div>
  <svg class="a" style="left:0px;top:235px" width="15" height="15" viewBox="0 0 15 15"><rect x="0" y="0" width="15" height="15" fill="#6b766b"/><rect x="1" y="1" width="6" height="6" fill="#eef6f6"/><rect x="8" y="1" width="6" height="6" fill="#f3e9a2"/><rect x="1" y="8" width="6" height="6" fill="#f3e9a2"/><rect x="8" y="8" width="6" height="6" fill="#f0e090"/></svg>
  <div class="a" style="left:20px;top:236px;line-height:16px;white-space:nowrap;color:#222">img</div>
  <div class="a" style="left:134px;top:236px;line-height:16px;white-space:nowrap;font-style:italic;color:#3a6b8f">204x209x3 uint8</div>
  <svg class="a" style="left:0px;top:252px" width="15" height="15" viewBox="0 0 15 15"><rect x="0" y="0" width="15" height="15" fill="#6b766b"/><rect x="1" y="1" width="6" height="6" fill="#eef6f6"/><rect x="8" y="1" width="6" height="6" fill="#f3e9a2"/><rect x="1" y="8" width="6" height="6" fill="#f3e9a2"/><rect x="8" y="8" width="6" height="6" fill="#f0e090"/></svg>
  <div class="a" style="left:20px;top:253px;line-height:16px;white-space:nowrap;color:#222">img_gray</div>
  <div class="a" style="left:134px;top:253px;line-height:16px;white-space:nowrap;font-style:italic;color:#3a6b8f">204x209 uint8</div>
  <svg class="a" style="left:0px;top:269px" width="15" height="15" viewBox="0 0 15 15"><rect x="0" y="0" width="15" height="15" fill="#6b766b"/><rect x="1" y="1" width="6" height="6" fill="#eef6f6"/><rect x="8" y="1" width="6" height="6" fill="#f3e9a2"/><rect x="1" y="8" width="6" height="6" fill="#f3e9a2"/><rect x="8" y="8" width="6" height="6" fill="#f0e090"/></svg>
  <div class="a" style="left:20px;top:270px;line-height:16px;white-space:nowrap;color:#222">keep_ratio</div>
  <div class="a" style="left:134px;top:270px;line-height:16px;white-space:nowrap;color:#222">0.2000</div>
  <svg class="a" style="left:0px;top:286px" width="15" height="15" viewBox="0 0 15 15"><rect x="0" y="0" width="15" height="15" fill="#6b766b"/><rect x="1" y="1" width="6" height="6" fill="#eef6f6"/><rect x="8" y="1" width="6" height="6" fill="#f3e9a2"/><rect x="1" y="8" width="6" height="6" fill="#f3e9a2"/><rect x="8" y="8" width="6" height="6" fill="#f0e090"/></svg>
  <div class="a" style="left:20px;top:287px;line-height:16px;white-space:nowrap;color:#222">m</div>
  <div class="a" style="left:134px;top:287px;line-height:16px;white-space:nowrap;color:#222">204</div>
  <svg class="a" style="left:0px;top:303px" width="15" height="15" viewBox="0 0 15 15"><rect x="0" y="0" width="15" height="15" fill="#6b766b"/><rect x="1" y="1" width="6" height="6" fill="#eef6f6"/><rect x="8" y="1" width="6" height="6" fill="#f3e9a2"/><rect x="1" y="8" width="6" height="6" fill="#f3e9a2"/><rect x="8" y="8" width="6" height="6" fill="#f0e090"/></svg>
  <div class="a" style="left:20px;top:304px;line-height:16px;white-space:nowrap;color:#222">n</div>
  <div class="a" style="left:134px;top:304px;line-height:16px;white-space:nowrap;color:#222">209</div>
  <svg class="a" style="left:0px;top:320px" width="15" height="15" viewBox="0 0 15 15"><rect x="0" y="0" width="15" height="15" fill="#6b766b"/><rect x="1" y="1" width="6" height="6" fill="#eef6f6"/><rect x="8" y="1" width="6" height="6" fill="#f3e9a2"/><rect x="1" y="8" width="6" height="6" fill="#f3e9a2"/><rect x="8" y="8" width="6" height="6" fill="#f0e090"/></svg>
  <div class="a" style="left:20px;top:321px;line-height:16px;white-space:nowrap;color:#222">num_coeffs</div>
  <div class="a" style="left:134px;top:321px;line-height:16px;white-space:nowrap;color:#222">8527</div>
  <svg class="a" style="left:0px;top:337px" width="15" height="15" viewBox="0 0 15 15"><rect x="0" y="0" width="15" height="15" fill="#6b766b"/><rect x="1" y="1" width="6" height="6" fill="#eef6f6"/><rect x="8" y="1" width="6" height="6" fill="#f3e9a2"/><rect x="1" y="8" width="6" height="6" fill="#f3e9a2"/><rect x="8" y="8" width="6" height="6" fill="#f0e090"/></svg>
  <div class="a" style="left:20px;top:338px;line-height:16px;white-space:nowrap;color:#222">num_coeffs_retain</div>
  <div class="a" style="left:134px;top:338px;line-height:16px;white-space:nowrap;color:#222">8527</div>
  <svg class="a" style="left:0px;top:354px" width="15" height="15" viewBox="0 0 15 15"><rect x="0" y="0" width="15" height="15" fill="#6b766b"/><rect x="1" y="1" width="6" height="6" fill="#eef6f6"/><rect x="8" y="1" width="6" height="6" fill="#f3e9a2"/><rect x="1" y="8" width="6" height="6" fill="#f3e9a2"/><rect x="8" y="8" width="6" height="6" fill="#f0e090"/></svg>
  <div class="a" style="left:20px;top:355px;line-height:16px;white-space:nowrap;color:#222">reconstructed_i...</div>
  <div class="a" style="left:134px;top:355px;line-height:16px;white-space:nowrap;font-style:italic;color:#3a6b8f">204x209 double</div>
  <svg class="a" style="left:0px;top:371px" width="15" height="15" viewBox="0 0 15 15"><rect x="0" y="0" width="15" height="15" fill="#6b766b"/><rect x="1" y="1" width="6" height="6" fill="#eef6f6"/><rect x="8" y="1" width="6" height="6" fill="#f3e9a2"/><rect x="1" y="8" width="6" height="6" fill="#f3e9a2"/><rect x="8" y="8" width="6" height="6" fill="#f0e090"/></svg>
  <div class="a" style="left:20px;top:372px;line-height:16px;white-space:nowrap;color:#222">reconstructed_i...</div>
  <div class="a" style="left:134px;top:372px;line-height:16px;white-space:nowrap;font-style:italic;color:#3a6b8f">204x209 complex d...</div>
  <svg class="a" style="left:0px;top:388px" width="15" height="15" viewBox="0 0 15 15"><rect x="0" y="0" width="15" height="15" fill="#6b766b"/><rect x="1" y="1" width="6" height="6" fill="#eef6f6"/><rect x="8" y="1" width="6" height="6" fill="#f3e9a2"/><rect x="1" y="8" width="6" height="6" fill="#f3e9a2"/><rect x="8" y="8" width="6" height="6" fill="#f0e090"/></svg>
  <div class="a" style="left:20px;top:389px;line-height:16px;white-space:nowrap;color:#222">reconstructed_i...</div>
  <div class="a" style="left:134px;top:389px;line-height:16px;white-space:nowrap;font-style:italic;color:#3a6b8f">204x209 double</div>
  <svg class="a" style="left:0px;top:405px" width="15" height="15" viewBox="0 0 15 15"><rect x="0" y="0" width="15" height="15" fill="#6b766b"/><rect x="1" y="1" width="6" height="6" fill="#eef6f6"/><rect x="8" y="1" width="6" height="6" fill="#f3e9a2"/><rect x="1" y="8" width="6" height="6" fill="#f3e9a2"/><rect x="8" y="8" width="6" height="6" fill="#f0e090"/></svg>
  <div class="a" style="left:20px;top:406px;line-height:16px;white-space:nowrap;color:#222">retain_percentage</div>
  <div class="a" style="left:134px;top:406px;line-height:16px;white-space:nowrap;color:#222">0.2000</div>
  <svg class="a" style="left:0px;top:422px" width="15" height="15" viewBox="0 0 15 15"><rect x="0" y="0" width="15" height="15" fill="#6b766b"/><rect x="1" y="1" width="6" height="6" fill="#eef6f6"/><rect x="8" y="1" width="6" height="6" fill="#f3e9a2"/><rect x="1" y="8" width="6" height="6" fill="#f3e9a2"/><rect x="8" y="8" width="6" height="6" fill="#f0e090"/></svg>
  <div class="a" style="left:20px;top:423px;line-height:16px;white-space:nowrap;color:#222">sz</div>
  <div class="a" style="left:134px;top:423px;line-height:16px;white-space:nowrap;color:#222">[204,209]</div>
</div>

<!-- status bar -->
<div class="a" style="left:1207px;top:1006px;width:126px;height:21px;border-top:1px solid #a8a8a8;border-left:1px solid #a8a8a8;border-right:1px solid #fff"><span class="a" style="left:4px;top:1px;color:#222">Zoom: 100%</span></div>
<div class="a" style="left:1335px;top:1006px;width:121px;height:21px;border-top:1px solid #a8a8a8;border-left:1px solid #a8a8a8;border-right:1px solid #fff"><span class="a" style="left:4px;top:1px;color:#222">GB18030</span></div>
<div class="a" style="left:1459px;top:1006px;width:56px;height:21px;border-top:1px solid #a8a8a8;border-left:1px solid #a8a8a8;border-right:1px solid #fff"><span class="a" style="left:4px;top:1px;color:#222">LF</span></div>
<div class="a" style="left:1517px;top:1006px;width:201px;height:21px;border-top:1px solid #a8a8a8;border-left:1px solid #a8a8a8;border-right:1px solid #fff"><span class="a" style="left:4px;top:1px;color:#222">gui</span></div>
<div class="a" style="left:1720px;top:1006px;width:114px;height:21px;border-top:1px solid #a8a8a8;border-left:1px solid #a8a8a8"><span class="a" style="left:4px;top:1px;color:#222">行&nbsp;&nbsp; 1</span><span class="a" style="left:89px;top:1px;color:#222">列</span></div>
<div class="a" style="left:0;top:1027px;width:1834px;height:5px;background:#15261a"></div>
<!-- dialog -->
<div class="a" style="left:411px;top:270px;width:913px;height:536px;border-radius:7px;box-shadow:0 8px 32px rgba(0,0,0,0.28),0 0 4px rgba(0,0,0,0.12)"></div>
<div class="a" style="left:411px;top:270px;width:913px;height:536px;background:#efefef;border:1px solid #b9b9b9;border-radius:7px;overflow:hidden">
  <div class="a" style="left:0;top:0;width:911px;height:30px;background:#fbfbfb"></div>
  <svg class="a" style="left:8px;top:6px" width="16" height="16" viewBox="0 0 16 16"><rect x="0.5" y="0.5" width="15" height="15" fill="#e9e9e9" stroke="#8a8a8a"/><rect x="1" y="1" width="14" height="2" fill="#7b8aa0"/><path d="M2 11 L7 8 L10 3 L14 13 L10 12 L7 14 Z" fill="#d9581f"/><path d="M2 11 L7 8 L8 12 Z" fill="#3e78b6"/></svg>
  <div class="a" style="left:30px;top:6px;font-size:14px;color:#111;line-height:18px">gui</div>
  <div class="a" style="left:792px;top:14px;width:11px;height:1px;background:#111"></div>
  <div class="a" style="left:837px;top:9px;width:11px;height:10px;border:1px solid #c4c4c4"></div>
  <svg class="a" style="left:883px;top:9px" width="11" height="11" viewBox="0 0 11 11"><path d="M0.5 0.5 L10.5 10.5 M10.5 0.5 L0.5 10.5" stroke="#222" stroke-width="1.1"/></svg>
  <div class="a" style="left:294px;top:52px;font-size:26px;color:#333;line-height:32px;font-family:'Liberation Serif',serif;letter-spacing:0.5px">植物叶片识别系统</div>
  <!-- buttons -->
  <div class="a" style="left:45px;top:111px;width:85px;height:24px;background:#e1edf8;border:1px solid #3b7fb4;border-radius:3px"></div>
  <div class="a" style="left:47px;top:113px;width:81px;height:20px;border:1px dotted #333"></div>
  <div class="a dbt" style="left:45px;top:111px;width:85px;line-height:24px">载入图片</div>
  <div class="a" style="left:45px;top:155px;width:85px;height:24px;background:#fbfbfb;border:1px solid #cfcfcf;border-radius:3px"></div>
  <div class="a dbt" style="left:45px;top:155px;width:85px;line-height:24px">图像增强</div>
  <div class="a" style="left:45px;top:201px;width:85px;height:25px;background:#fbfbfb;border:1px solid #cfcfcf;border-radius:3px"></div>
  <div class="a dbt" style="left:45px;top:201px;width:85px;line-height:25px">图像分割</div>
  <div class="a" style="left:45px;top:246px;width:85px;height:25px;background:#fbfbfb;border:1px solid #cfcfcf;border-radius:3px"></div>
  <div class="a dbt" style="left:45px;top:246px;width:85px;line-height:25px">特征提取</div>
  <div class="a" style="left:45px;top:346px;width:86px;height:41px;background:#fbfbfb;border:1px solid #cfcfcf;border-radius:3px"></div>
  <div class="a" style="left:45px;top:346px;width:86px;line-height:41px;text-align:center;font-size:18px;color:#333;font-family:'Liberation Serif',serif">识别</div>
  <!-- images -->
  <svg class="a" style="left:186px;top:109px" width="162" height="162" viewBox="0 0 161 161" preserveAspectRatio="none">
    <defs>
      <clipPath id="cl1"><path d="M0 0 L104 0 L104 8 C94 18 86 30 83 44 C81 58 83 78 84 90 C86 110 86 135 86.5 161 L0 161 Z"/></clipPath>
      <filter id="tx" x="0" y="0" width="100%" height="100%"><feTurbulence type="fractalNoise" baseFrequency="0.9" numOctaves="2" seed="3"/><feColorMatrix type="matrix" values="0 0 0 0 0  0 0 0 0 0  0 0 0 0 0  0 0 0 0.35 0"/><feComposite in2="SourceGraphic" operator="in"/></filter>
      <radialGradient id="g1a" cx="0.35" cy="0.55" r="0.7"><stop offset="0" stop-color="#6f9f7d"/><stop offset="1" stop-color="#5b8e68"/></radialGradient>
      <radialGradient id="g1b" cx="0.7" cy="0.5" r="0.6"><stop offset="0" stop-color="#1c6a28"/><stop offset="1" stop-color="#2c7c38"/></radialGradient>
    </defs>
    <rect width="161" height="161" fill="#000"/>
    <path d="M106.3 4.9 C109.9 5.3 107.8 12.2 108.5 16.0 C109.2 19.9 108.7 23.8 110.4 28.0 C112.1 32.2 115.0 36.4 118.6 41.1 C122.2 45.8 128.0 51.6 131.8 56.0 C135.7 60.4 139.5 62.3 141.7 67.5 C143.9 72.7 144.7 80.7 145.0 87.3 C145.3 93.9 144.7 100.4 143.3 107.0 C141.9 113.6 140.3 120.8 136.7 126.8 C133.1 132.8 127.7 138.6 121.9 143.3 C116.1 148.0 107.9 152.0 102.1 154.8 C96.3 157.6 93.0 160.8 87.0 160.0 C81.0 159.2 72.7 153.2 65.9 149.9 C59.1 146.6 53.0 143.3 46.1 140.0 C39.2 136.7 30.5 133.8 24.7 130.0 C18.9 126.2 14.8 121.8 11.5 116.9 C8.2 112.0 6.1 105.2 5.0 100.4 C3.9 95.6 4.7 92.2 4.8 87.8 C4.9 83.4 4.8 78.1 5.7 73.9 C6.6 69.7 7.8 66.4 10.0 62.5 C12.2 58.6 16.0 53.5 18.8 50.3 C21.6 47.1 23.0 45.8 26.6 43.3 C30.2 40.8 34.6 38.5 40.6 35.5 C46.6 32.5 54.7 28.6 62.4 25.0 C70.1 21.4 79.5 17.1 86.8 13.7 C94.1 10.3 102.7 4.5 106.3 4.9 Z" fill="url(#g1b)"/>
    <path d="M106.3 4.9 C109.9 5.3 107.8 12.2 108.5 16.0 C109.2 19.9 108.7 23.8 110.4 28.0 C112.1 32.2 115.0 36.4 118.6 41.1 C122.2 45.8 128.0 51.6 131.8 56.0 C135.7 60.4 139.5 62.3 141.7 67.5 C143.9 72.7 144.7 80.7 145.0 87.3 C145.3 93.9 144.7 100.4 143.3 107.0 C141.9 113.6 140.3 120.8 136.7 126.8 C133.1 132.8 127.7 138.6 121.9 143.3 C116.1 148.0 107.9 152.0 102.1 154.8 C96.3 157.6 93.0 160.8 87.0 160.0 C81.0 159.2 72.7 153.2 65.9 149.9 C59.1 146.6 53.0 143.3 46.1 140.0 C39.2 136.7 30.5 133.8 24.7 130.0 C18.9 126.2 14.8 121.8 11.5 116.9 C8.2 112.0 6.1 105.2 5.0 100.4 C3.9 95.6 4.7 92.2 4.8 87.8 C4.9 83.4 4.8 78.1 5.7 73.9 C6.6 69.7 7.8 66.4 10.0 62.5 C12.2 58.6 16.0 53.5 18.8 50.3 C21.6 47.1 23.0 45.8 26.6 43.3 C30.2 40.8 34.6 38.5 40.6 35.5 C46.6 32.5 54.7 28.6 62.4 25.0 C70.1 21.4 79.5 17.1 86.8 13.7 C94.1 10.3 102.7 4.5 106.3 4.9 Z" fill="url(#g1a)" clip-path="url(#cl1)"/>
    <path d="M106.3 4.9 C109.9 5.3 107.8 12.2 108.5 16.0 C109.2 19.9 108.7 23.8 110.4 28.0 C112.1 32.2 115.0 36.4 118.6 41.1 C122.2 45.8 128.0 51.6 131.8 56.0 C135.7 60.4 139.5 62.3 141.7 67.5 C143.9 72.7 144.7 80.7 145.0 87.3 C145.3 93.9 144.7 100.4 143.3 107.0 C141.9 113.6 140.3 120.8 136.7 126.8 C133.1 132.8 127.7 138.6 121.9 143.3 C116.1 148.0 107.9 152.0 102.1 154.8 C96.3 157.6 93.0 160.8 87.0 160.0 C81.0 159.2 72.7 153.2 65.9 149.9 C59.1 146.6 53.0 143.3 46.1 140.0 C39.2 136.7 30.5 133.8 24.7 130.0 C18.9 126.2 14.8 121.8 11.5 116.9 C8.2 112.0 6.1 105.2 5.0 100.4 C3.9 95.6 4.7 92.2 4.8 87.8 C4.9 83.4 4.8 78.1 5.7 73.9 C6.6 69.7 7.8 66.4 10.0 62.5 C12.2 58.6 16.0 53.5 18.8 50.3 C21.6 47.1 23.0 45.8 26.6 43.3 C30.2 40.8 34.6 38.5 40.6 35.5 C46.6 32.5 54.7 28.6 62.4 25.0 C70.1 21.4 79.5 17.1 86.8 13.7 C94.1 10.3 102.7 4.5 106.3 4.9 Z" fill="#000" filter="url(#tx)" opacity="0.5"/>
    <path d="M84 55 C74 46 64 40 50 33 M84 88 C72 78 60 66 42 52 M85 112 C70 100 55 88 35 78 M86 135 C72 126 58 116 40 108 M84 58 C96 50 106 44 114 34 M84 88 C98 78 112 66 126 58 M85 110 C100 102 116 92 134 86 M86 138 C100 128 114 122 130 118 M42 52 C34 64 34 78 40 92 C34 104 26 116 30 130 M126 58 C132 72 132 88 126 100 C132 112 130 124 122 136" fill="none" stroke="#8ed08a" stroke-width="0.9" opacity="0.45"/>
    <path d="M104 8 C94 18 86 30 83 44 C81 58 83 78 84 90 C86 110 86 135 86.5 160" fill="none" stroke="#98da88" stroke-width="1.4"/>
  </svg>
  <svg class="a" style="left:398px;top:111px" width="162" height="162" viewBox="0 0 161 161" preserveAspectRatio="none">
    <defs>
      <radialGradient id="g2a" cx="0.35" cy="0.55" r="0.7"><stop offset="0" stop-color="#8c8c8c"/><stop offset="1" stop-color="#7a7a7a"/></radialGradient>
      <radialGradient id="g2b" cx="0.7" cy="0.5" r="0.6"><stop offset="0" stop-color="#555"/><stop offset="1" stop-color="#6a6a6a"/></radialGradient>
    </defs>
    <rect width="161" height="161" fill="#000"/>
    <path d="M106.3 4.9 C109.9 5.3 107.8 12.2 108.5 16.0 C109.2 19.9 108.7 23.8 110.4 28.0 C112.1 32.2 115.0 36.4 118.6 41.1 C122.2 45.8 128.0 51.6 131.8 56.0 C135.7 60.4 139.5 62.3 141.7 67.5 C143.9 72.7 144.7 80.7 145.0 87.3 C145.3 93.9 144.7 100.4 143.3 107.0 C141.9 113.6 140.3 120.8 136.7 126.8 C133.1 132.8 127.7 138.6 121.9 143.3 C116.1 148.0 107.9 152.0 102.1 154.8 C96.3 157.6 93.0 160.8 87.0 160.0 C81.0 159.2 72.7 153.2 65.9 149.9 C59.1 146.6 53.0 143.3 46.1 140.0 C39.2 136.7 30.5 133.8 24.7 130.0 C18.9 126.2 14.8 121.8 11.5 116.9 C8.2 112.0 6.1 105.2 5.0 100.4 C3.9 95.6 4.7 92.2 4.8 87.8 C4.9 83.4 4.8 78.1 5.7 73.9 C6.6 69.7 7.8 66.4 10.0 62.5 C12.2 58.6 16.0 53.5 18.8 50.3 C21.6 47.1 23.0 45.8 26.6 43.3 C30.2 40.8 34.6 38.5 40.6 35.5 C46.6 32.5 54.7 28.6 62.4 25.0 C70.1 21.4 79.5 17.1 86.8 13.7 C94.1 10.3 102.7 4.5 106.3 4.9 Z" fill="url(#g2b)"/>
    <path d="M106.3 4.9 C109.9 5.3 107.8 12.2 108.5 16.0 C109.2 19.9 108.7 23.8 110.4 28.0 C112.1 32.2 115.0 36.4 118.6 41.1 C122.2 45.8 128.0 51.6 131.8 56.0 C135.7 60.4 139.5 62.3 141.7 67.5 C143.9 72.7 144.7 80.7 145.0 87.3 C145.3 93.9 144.7 100.4 143.3 107.0 C141.9 113.6 140.3 120.8 136.7 126.8 C133.1 132.8 127.7 138.6 121.9 143.3 C116.1 148.0 107.9 152.0 102.1 154.8 C96.3 157.6 93.0 160.8 87.0 160.0 C81.0 159.2 72.7 153.2 65.9 149.9 C59.1 146.6 53.0 143.3 46.1 140.0 C39.2 136.7 30.5 133.8 24.7 130.0 C18.9 126.2 14.8 121.8 11.5 116.9 C8.2 112.0 6.1 105.2 5.0 100.4 C3.9 95.6 4.7 92.2 4.8 87.8 C4.9 83.4 4.8 78.1 5.7 73.9 C6.6 69.7 7.8 66.4 10.0 62.5 C12.2 58.6 16.0 53.5 18.8 50.3 C21.6 47.1 23.0 45.8 26.6 43.3 C30.2 40.8 34.6 38.5 40.6 35.5 C46.6 32.5 54.7 28.6 62.4 25.0 C70.1 21.4 79.5 17.1 86.8 13.7 C94.1 10.3 102.7 4.5 106.3 4.9 Z" fill="url(#g2a)" clip-path="url(#cl1)"/>
    <path d="M106.3 4.9 C109.9 5.3 107.8 12.2 108.5 16.0 C109.2 19.9 108.7 23.8 110.4 28.0 C112.1 32.2 115.0 36.4 118.6 41.1 C122.2 45.8 128.0 51.6 131.8 56.0 C135.7 60.4 139.5 62.3 141.7 67.5 C143.9 72.7 144.7 80.7 145.0 87.3 C145.3 93.9 144.7 100.4 143.3 107.0 C141.9 113.6 140.3 120.8 136.7 126.8 C133.1 132.8 127.7 138.6 121.9 143.3 C116.1 148.0 107.9 152.0 102.1 154.8 C96.3 157.6 93.0 160.8 87.0 160.0 C81.0 159.2 72.7 153.2 65.9 149.9 C59.1 146.6 53.0 143.3 46.1 140.0 C39.2 136.7 30.5 133.8 24.7 130.0 C18.9 126.2 14.8 121.8 11.5 116.9 C8.2 112.0 6.1 105.2 5.0 100.4 C3.9 95.6 4.7 92.2 4.8 87.8 C4.9 83.4 4.8 78.1 5.7 73.9 C6.6 69.7 7.8 66.4 10.0 62.5 C12.2 58.6 16.0 53.5 18.8 50.3 C21.6 47.1 23.0 45.8 26.6 43.3 C30.2 40.8 34.6 38.5 40.6 35.5 C46.6 32.5 54.7 28.6 62.4 25.0 C70.1 21.4 79.5 17.1 86.8 13.7 C94.1 10.3 102.7 4.5 106.3 4.9 Z" fill="#000" filter="url(#tx)" opacity="0.5"/>
    <path d="M84 55 C74 46 64 40 50 33 M84 88 C72 78 60 66 42 52 M85 112 C70 100 55 88 35 78 M86 135 C72 126 58 116 40 108 M84 58 C96 50 106 44 114 34 M84 88 C98 78 112 66 126 58 M85 110 C100 102 116 92 134 86 M86 138 C100 128 114 122 130 118 M42 52 C34 64 34 78 40 92 C34 104 26 116 30 130 M126 58 C132 72 132 88 126 100 C132 112 130 124 122 136" fill="none" stroke="#c0c0c0" stroke-width="0.9" opacity="0.5"/>
    <path d="M104 8 C94 18 86 30 83 44 C81 58 83 78 84 90 C86 110 86 135 86.5 160" fill="none" stroke="#d6d6d6" stroke-width="1.4"/>
  </svg>
  <svg class="a" style="left:616px;top:111px" width="161" height="161" viewBox="0 0 161 161">
    <rect width="161" height="161" fill="#000"/>
    <path d="M90 0 L112.5 0 L112.5 26.4 L123 36 L140.6 51.6 L151.3 65.2 L150.3 94.3 L148.4 117.5 L142.5 133 L134.8 142.7 L121.2 152.4 L107.7 159.2 L61.1 159.2 L45.6 148.5 L30 136.9 L10.8 127.2 L3 113.7 L0 102 L0 69 L5 55.5 L12.7 43.9 L24.3 34.2 L49.5 22.6 L72.8 12 L88.3 5.1 Z" fill="#fff"/>
  </svg>
  <!-- cursor -->
  <svg class="a" style="left:426px;top:123px" width="12" height="18" viewBox="0 0 12 18"><path d="M1 1 L1 14 L4 11 L7 17 L9 16 L6 10 L10 10 Z" fill="#fff" stroke="#000" stroke-width="0.8"/></svg>
  <!-- labels & edits -->
  <div class="a" style="left:163px;top:328px;font-size:18px;color:#333;line-height:22px;font-family:'Liberation Serif',serif">结果</div>
  <div class="a" style="left:163px;top:369px;font-size:18px;color:#333;line-height:22px;font-family:'Liberation Serif',serif">时延</div>
  <div class="a" style="left:220px;top:330px;width:108px;height:29px;background:#fdfdfd;border:1px solid #b5b5b5"></div>
  <div class="a" style="left:220px;top:370px;width:108px;height:30px;background:#fdfdfd;border:1px solid #b5b5b5"></div>
  <!-- group box -->
  <div class="a" style="left:362px;top:310px;width:192px;height:153px;border:1px solid #c9c9c9;box-shadow:inset 1px 1px 0 #fff"></div>
  <div class="a" style="left:428px;top:300px;width:58px;height:20px;background:#efefef"></div>
  <div class="a" style="left:431px;top:300px;font-size:16px;font-weight:bold;color:#111;line-height:20px">特征值</div>
  <div class="a" style="left:384px;top:320px;width:146px;height:128px;background:#fff;border:1px solid #a0a0a0;border-top-color:#e8e8e8;border-right-color:#8a8a8a;border-bottom-color:#8a8a8a;overflow:hidden">
    <div class="a" style="left:128px;top:0;width:18px;height:128px;background:#f0f0f0"></div>
    <div class="a" style="left:135px;top:16px;width:2px;height:46px;background:#888"></div>
    <div class="a lbx" style="top:1px;-webkit-text-stroke:0.3px #222">傅里叶描述子:</div>
    <div class="a lbx" style="top:17px">0.25743</div>
    <div class="a lbx" style="top:33px">0.085075</div>
    <div class="a lbx" style="top:49px">0.022277</div>
    <div class="a lbx" style="top:65px">0.014822</div>
    <div class="a lbx" style="top:81px">0.0096414</div>
    <div class="a lbx" style="top:97px">0.01148</div>
    <div class="a lbx" style="top:113px">0.013541</div>
  </div>
</div>
<style>
.dbt{text-align:center;font-size:13px;color:#000;-webkit-text-stroke:0.35px #000}
.lbx{left:4px;font-size:12.5px;line-height:16px;color:#222;white-space:nowrap}
</style>
<!-- network widget -->
<div class="a" style="left:1711px;top:964px;width:100px;height:42px;border-radius:21px;background:#2a2f37;box-shadow:0 1px 3px rgba(0,0,0,0.3)"></div>
<div class="a" style="left:1716px;top:985px;width:70px;height:1px;background:#3a4048"></div>
<svg class="a" style="left:1722px;top:972px" width="9" height="8" viewBox="0 0 9 8"><path d="M4.5 0 L9 4.5 L6 4.5 L6 8 L3 8 L3 4.5 L0 4.5 Z" fill="#4aa8e0"/></svg>
<svg class="a" style="left:1722px;top:993px" width="9" height="8" viewBox="0 0 9 8"><path d="M4.5 8 L9 3.5 L6 3.5 L6 0 L3 0 L3 3.5 L0 3.5 Z" fill="#3cb85a"/></svg>
<div class="a" style="left:1744px;top:968px;font-size:11px;color:#ddd;font-weight:bold;line-height:14px">0<span style="font-size:9.5px;color:#9aa;font-weight:normal">K/s</span></div>
<div class="a" style="left:1735px;top:990px;font-size:11px;color:#ddd;font-weight:bold;line-height:14px">4.9<span style="font-size:9.5px;color:#9aa;font-weight:normal">K/s</span></div>
<div class="a" style="left:1771px;top:955px;width:59px;height:59px;border-radius:50%;background:#474d56;box-shadow:0 0 2px rgba(0,0,0,0.5)"></div>
<svg class="a" style="left:1771px;top:955px" width="58" height="58" viewBox="0 0 58 58"><path d="M33.34 4.38 A25 25 0 0 1 53.90 31.18" fill="none" stroke="#5fd0c0" stroke-width="1.8"/><path d="M53.90 31.18 A25 25 0 0 1 33.34 53.62" fill="none" stroke="#8fd38a" stroke-width="1.8"/><path d="M33.34 53.62 A25 25 0 0 1 14.66 49.48" fill="none" stroke="#e0d070" stroke-width="1.8"/><path d="M14.66 49.48 A25 25 0 0 1 4.24 32.48" fill="none" stroke="#e6a060" stroke-width="1.8"/></svg>
<div class="a" style="left:1785px;top:970px;font-size:23px;color:#e6e6e6;line-height:28px;letter-spacing:-0.5px">76<span style="font-size:10px;font-weight:bold">%</span></div>
</body></html>
